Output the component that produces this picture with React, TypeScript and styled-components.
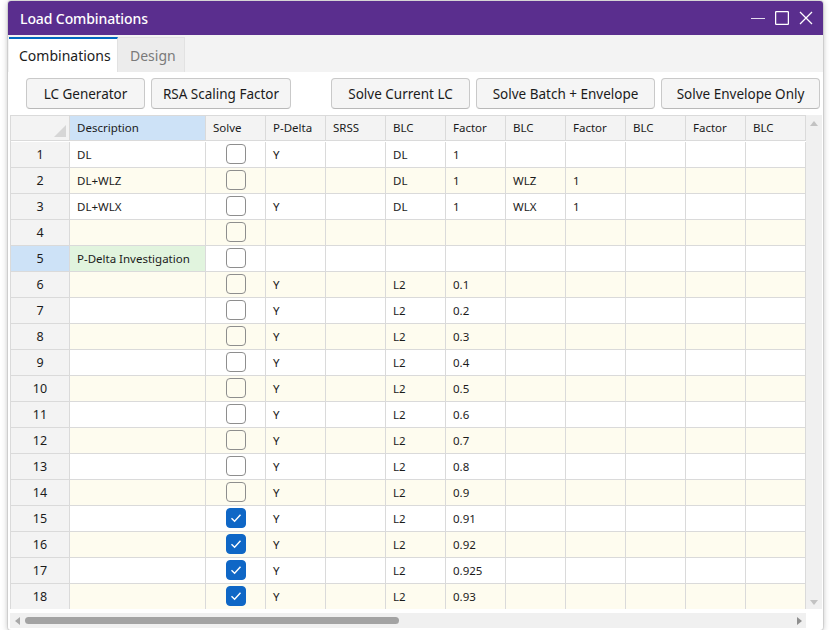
import React from "react";
import styled, { createGlobalStyle, css } from "styled-components";

const GlobalStyle = createGlobalStyle`
  html, body {
    margin: 0;
    background: #ffffff;
  }
  body {
    font-family: "Noto Sans", "Open Sans", "Liberation Sans", sans-serif;
    color: #1b1b1b;
  }
`;

type Row = {
  desc: string;
  checked: boolean;
  pDelta: string;
  blc1: string;
  f1: string;
  blc2?: string;
  f2?: string;
  green?: boolean;
  selected?: boolean;
};

const rows: Row[] = [
  { desc: "DL", checked: false, pDelta: "Y", blc1: "DL", f1: "1" },
  { desc: "DL+WLZ", checked: false, pDelta: "", blc1: "DL", f1: "1", blc2: "WLZ", f2: "1" },
  { desc: "DL+WLX", checked: false, pDelta: "Y", blc1: "DL", f1: "1", blc2: "WLX", f2: "1" },
  { desc: "", checked: false, pDelta: "", blc1: "", f1: "" },
  { desc: "P-Delta Investigation", checked: false, pDelta: "", blc1: "", f1: "", green: true, selected: true },
  ...["0.1", "0.2", "0.3", "0.4", "0.5", "0.6", "0.7", "0.8", "0.9"].map((f) => ({
    desc: "",
    checked: false,
    pDelta: "Y",
    blc1: "L2",
    f1: f,
  })),
  ...["0.91", "0.92", "0.925", "0.93"].map((f) => ({
    desc: "",
    checked: true,
    pDelta: "Y",
    blc1: "L2",
    f1: f,
  })),
];

const headers = ["Description", "Solve", "P-Delta", "SRSS", "BLC", "Factor", "BLC", "Factor", "BLC", "Factor", "BLC"];

export default function App() {
  return (
    <>
      <GlobalStyle />
      <Window>
        <TitleBar>
          <Title>Load Combinations</Title>
          <Controls>
            <svg width="14" height="14" viewBox="0 0 14 14">
              <path d="M0 7.5h14" stroke="#e4dcee" strokeWidth="1.2" />
            </svg>
            <svg width="14" height="14" viewBox="0 0 14 14">
              <rect x="0.6" y="0.6" width="12.8" height="12.8" fill="none" stroke="#ffffff" strokeWidth="1.3" rx="1" />
            </svg>
            <svg width="14" height="14" viewBox="0 0 14 14">
              <path d="M1 1L13 13M13 1L1 13" stroke="#ffffff" strokeWidth="1.3" />
            </svg>
          </Controls>
        </TitleBar>

        <TabStrip>
          <Tab $active>Combinations</Tab>
          <Tab>Design</Tab>
        </TabStrip>

        <Content>
          <Toolbar>
            <Button $w={119}>LC Generator</Button>
            <Button $w={140}>RSA Scaling Factor</Button>
            <Spacer />
            <Button $w={139}>Solve Current LC</Button>
            <Button $w={179}>Solve Batch + Envelope</Button>
            <Button $w={159}>Solve Envelope Only</Button>
          </Toolbar>

          <GridFrame>
            <GridArea>
              <Grid>
                <Corner>
                  <svg width="12" height="12" viewBox="0 0 12 12">
                    <path d="M12 0V12H0Z" fill="#d6d6d6" />
                  </svg>
                </Corner>
                {headers.map((h, i) => (
                  <HeaderCell key={i} $selected={i === 0}>
                    {h}
                  </HeaderCell>
                ))}
                {rows.map((r, i) => {
                  const alt = i % 2 === 1;
                  // SRSS, BLC, Factor, BLC, Factor, BLC, Factor, BLC
                  const cells = ["", r.blc1, r.f1, r.blc2 ?? "", r.f2 ?? "", "", "", ""];
                  return (
                    <React.Fragment key={i}>
                      <RowHeader $selected={r.selected}>{i + 1}</RowHeader>
                      <Cell $alt={alt} $green={r.green}>
                        {r.desc}
                      </Cell>
                      <Cell $alt={alt} $center>
                        <Check $checked={r.checked}>
                          {r.checked && (
                            <svg width="12" height="10" viewBox="0 0 12 10">
                              <path d="M1.5 5.2L4.6 8.2L10.5 1.8" fill="none" stroke="#ffffff" strokeWidth="1.4" />
                            </svg>
                          )}
                        </Check>
                      </Cell>
                      <Cell $alt={alt}>{r.pDelta}</Cell>
                      {cells.map((c, j) => (
                        <Cell key={j} $alt={alt}>
                          {c}
                        </Cell>
                      ))}
                    </React.Fragment>
                  );
                })}
              </Grid>
              <VScroll>
                <Arrow viewBox="0 0 8 6">
                  <path d="M0 6L4 1L8 6Z" fill="#c2c2c2" />
                </Arrow>
                <Arrow viewBox="0 0 8 6">
                  <path d="M0 0L4 5L8 0Z" fill="#c2c2c2" />
                </Arrow>
              </VScroll>
            </GridArea>
            <HScroll>
              <svg width="6" height="8" viewBox="0 0 6 8">
                <path d="M6 0L1 4L6 8Z" fill="#a8a8a8" />
              </svg>
              <Thumb />
              <HSpacer />
              <svg width="6" height="8" viewBox="0 0 6 8">
                <path d="M0 0L5 4L0 8Z" fill="#8f8f8f" />
              </svg>
            </HScroll>
          </GridFrame>
        </Content>
      </Window>
    </>
  );
}

const Window = styled.div`
  margin: 1px 0 0 8px;
  width: 815px;
  height: 629px;
  display: flex;
  flex-direction: column;
  background: #ffffff;
  border-radius: 3px;
  overflow: hidden;
  box-shadow: 0 1px 6px rgba(0, 0, 0, 0.28), 0 0 0 1px rgba(0, 0, 0, 0.08);
`;

const TitleBar = styled.div`
  height: 34px;
  flex: none;
  background: #5a2e8e;
  display: flex;
  align-items: center;
  justify-content: space-between;
  padding: 0 10px 0 12px;
`;

const Title = styled.div`
  color: #ffffff;
  font-size: 14px;
  font-weight: 500;
  letter-spacing: -0.1px;
`;

const Controls = styled.div`
  display: flex;
  align-items: center;
  gap: 10px;
  svg {
    display: block;
  }
`;

const TabStrip = styled.div`
  height: 37px;
  flex: none;
  background: #f3f3f3;
  display: flex;
  align-items: flex-end;
  padding-left: 1px;
`;

const Tab = styled.div<{ $active?: boolean }>`
  height: 35px;
  box-sizing: border-box;
  display: flex;
  align-items: center;
  padding: 0 11px 0 10px;
  font-size: 14px;
  border-right: 1px solid #e2e2e2;
  ${(p) =>
    p.$active
      ? css`
          background: #ffffff;
          color: #1b1b1b;
          border-top: 2px solid #0067c0;
          width: 109px;
        `
      : css`
          background: #ececec;
          color: #7a7a7a;
          border-top: 1px solid #e2e2e2;
          width: 67px;
          padding: 0 0 0 12px;
        `}
`;

const Content = styled.div`
  flex: 1;
  display: flex;
  flex-direction: column;
  padding: 6px 0 0 1px;
`;

const Toolbar = styled.div`
  display: flex;
  gap: 6px;
  padding-left: 17px;
  height: 31px;
`;

const Spacer = styled.div`
  width: 28px;
`;

const Button = styled.div<{ $w: number }>`
  width: ${(p) => p.$w}px;
  box-sizing: border-box;
  height: 31px;
  display: flex;
  align-items: center;
  justify-content: center;
  background: #f5f5f5;
  border: 1px solid #c9c9c9;
  border-bottom-color: #b9b9b9;
  border-radius: 4px;
  font-size: 13.5px;
  color: #1b1b1b;
  white-space: nowrap;
`;

const GridFrame = styled.div`
  margin-top: 6px;
  margin-left: 1px;
  display: flex;
  flex-direction: column;
  width: 812px;
`;

const GridArea = styled.div`
  display: flex;
  height: 494px;
`;

const Grid = styled.div`
  width: 796px;
  overflow: hidden;
  display: grid;
  grid-template-columns: 59px 136px repeat(10, 60px);
  grid-auto-rows: 26px;
  align-content: start;
  border-left: 1px solid #dadada;
  border-top: 1px solid #dadada;
  box-sizing: border-box;
  font-size: 11.5px;
`;

const baseCell = css`
  box-sizing: border-box;
  border-right: 1px solid #dadada;
  border-bottom: 1px solid #dadada;
  display: flex;
  align-items: center;
  white-space: nowrap;
  overflow: hidden;
  padding-bottom: 1px;
`;

const Corner = styled.div`
  ${baseCell};
  background: #f3f3f3;
  align-items: flex-end;
  justify-content: flex-end;
  padding: 0 3px 3px 0;
  height: 25px;
  svg {
    display: block;
  }
`;

const HeaderCell = styled.div<{ $selected?: boolean }>`
  ${baseCell};
  height: 25px;
  padding-left: 7px;
  background: ${(p) => (p.$selected ? "#cde2f7" : "#f3f3f3")};
  color: #1b1b1b;
`;

const RowHeader = styled.div<{ $selected?: boolean }>`
  ${baseCell};
  justify-content: center;
  background: ${(p) => (p.$selected ? "#cde2f7" : "#f3f3f3")};
  font-size: 12.5px;
`;

const Cell = styled.div<{ $alt?: boolean; $green?: boolean; $center?: boolean }>`
  ${baseCell};
  padding-left: ${(p) => (p.$center ? 0 : 7)}px;
  justify-content: ${(p) => (p.$center ? "center" : "flex-start")};
  background: ${(p) => (p.$green ? "#e1f4de" : p.$alt ? "#fefcef" : "#ffffff")};
`;

const Check = styled.div<{ $checked: boolean }>`
  width: 20px;
  height: 20px;
  box-sizing: border-box;
  border-radius: 4px;
  display: flex;
  align-items: center;
  justify-content: center;
  ${(p) =>
    p.$checked
      ? css`
          background: #0f67c6;
          border: 1px solid #0f67c6;
        `
      : css`
          background: transparent;
          border: 1px solid #8e8e8e;
        `}
`;

const VScroll = styled.div`
  width: 16px;
  background: #f0f0f0;
  display: flex;
  flex-direction: column;
  justify-content: space-between;
  align-items: center;
  padding: 5px 0 3px;
  box-sizing: border-box;
`;

const Arrow = styled.svg`
  width: 8px;
  height: 6px;
  display: block;
`;

const HScroll = styled.div`
  margin-top: 4px;
  width: 796px;
  height: 15px;
  background: #f0f0f0;
  display: flex;
  align-items: center;
  padding: 0 3px 0 4px;
  box-sizing: border-box;
  svg {
    display: block;
    flex: none;
  }
`;

const Thumb = styled.div`
  margin-left: 5px;
  width: 374px;
  height: 7px;
  border-radius: 4px;
  background: #a3a3a3;
`;

const HSpacer = styled.div`
  flex: 1;
`;
